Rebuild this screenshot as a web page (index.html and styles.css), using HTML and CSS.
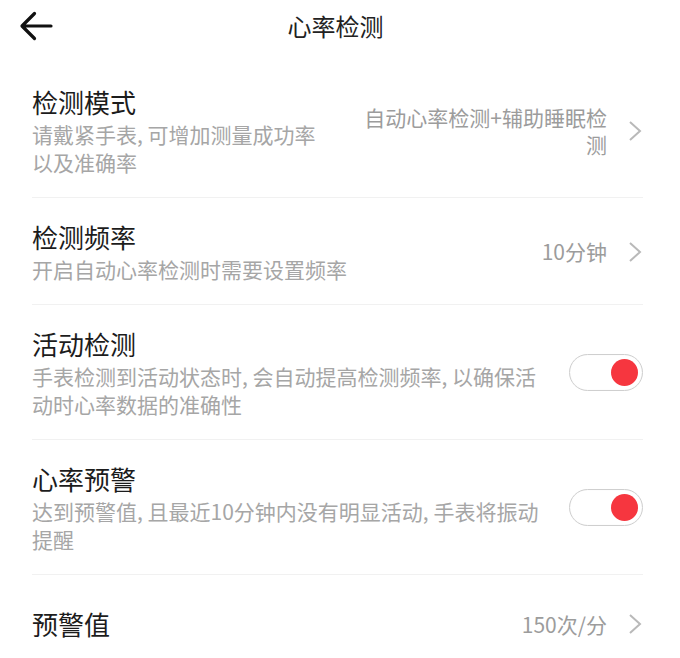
FILE: index.html
```html
<!DOCTYPE html>
<html lang="zh-CN">
<head>
<meta charset="utf-8">
<title>心率检测</title>
<link rel="stylesheet" href="styles.css">
</head>
<body>
<header class="topbar">
  <div class="back">
    <svg width="34" height="30" viewBox="0 0 34 30" aria-hidden="true">
      <path d="M32 15H3.5M15.5 2.5L3 15l12.5 12.5" fill="none" stroke="#111" stroke-width="3.2" stroke-linecap="round" stroke-linejoin="round"/>
    </svg>
  </div>
  <h1 class="title">心率检测</h1>
  <div class="spacer"></div>
</header>

<main class="list">
  <div class="row">
    <div class="text">
      <div class="label">检测模式</div>
      <div class="desc">请戴紧手表, 可增加测量成功率以及准确率</div>
    </div>
    <div class="value value-wrap">自动心率检测+辅助睡眠检测</div>
    <svg class="chev" width="16" height="22" viewBox="0 0 16 22" aria-hidden="true"><polyline points="3,2 13,11 3,20" fill="none" stroke="#b9b9b9" stroke-width="2"/></svg>
  </div>

  <div class="row">
    <div class="text">
      <div class="label">检测频率</div>
      <div class="desc">开启自动心率检测时需要设置频率</div>
    </div>
    <div class="value">10分钟</div>
    <svg class="chev" width="16" height="22" viewBox="0 0 16 22" aria-hidden="true"><polyline points="3,2 13,11 3,20" fill="none" stroke="#b9b9b9" stroke-width="2"/></svg>
  </div>

  <div class="row">
    <div class="text">
      <div class="label">活动检测</div>
      <div class="desc">手表检测到活动状态时, 会自动提高检测频率, 以确保活动时心率数据的准确性</div>
    </div>
    <div class="switch on"><span class="knob"></span></div>
  </div>

  <div class="row">
    <div class="text">
      <div class="label">心率预警</div>
      <div class="desc">达到预警值, 且最近10分钟内没有明显活动, 手表将振动提醒</div>
    </div>
    <div class="switch on"><span class="knob"></span></div>
  </div>

  <div class="row row-single">
    <div class="text">
      <div class="label">预警值</div>
    </div>
    <div class="value">150次/分</div>
    <svg class="chev" width="16" height="22" viewBox="0 0 16 22" aria-hidden="true"><polyline points="3,2 13,11 3,20" fill="none" stroke="#b9b9b9" stroke-width="2"/></svg>
  </div>
</main>
</body>
</html>
```

FILE: styles.css
```css
* { box-sizing: border-box; }

html, body {
  margin: 0;
  padding: 0;
  background: #ffffff;
}

body {
  font-family: "Noto Sans CJK SC", "Noto Sans", sans-serif;
  color: #1c1c1c;
  width: 680px;
  overflow: hidden;
}

.topbar {
  height: 52px;
  display: grid;
  grid-template-columns: 1fr auto 1fr;
  align-items: center;
  padding: 0 28px 0 19px;
}

.back {
  display: flex;
  align-items: center;
}

.back svg { display: block; }

.title {
  margin: 0;
  font-size: 24px;
  font-weight: 400;
  line-height: 32px;
  color: #222;
}

.list {
  margin-top: 11px;
  padding: 0 37px 0 32px;
}

.row {
  display: flex;
  align-items: center;
  padding: 22px 0 21px;
  border-bottom: 1px solid #f1f1f1;
}

.row-single {
  padding: 32px 0 32px;
  border-bottom: none;
}

.text {
  flex: 1;
  min-width: 0;
}

.label {
  font-size: 26px;
  line-height: 34px;
  color: #1c1c1c;
}

.desc {
  margin-top: 1px;
  font-size: 21px;
  line-height: 28px;
  color: #a6a6a6;
}

.value {
  flex-shrink: 0;
  margin-left: 24px;
  font-size: 21px;
  line-height: 27px;
  color: #9c9c9c;
  text-align: right;
}

.value-wrap {
  max-width: 252px;
}

.chev {
  flex-shrink: 0;
  display: block;
  margin-left: 20px;
}

.switch {
  flex-shrink: 0;
  margin-left: 24px;
  width: 74px;
  height: 37px;
  border-radius: 19px;
  border: 1.5px solid #cfcfcf;
  background: #fff;
  box-shadow: inset 0 0 1px rgba(0,0,0,0.08);
  display: flex;
  align-items: center;
  justify-content: flex-end;
  padding-right: 4px;
}

.knob {
  width: 27px;
  height: 27px;
  border-radius: 50%;
  background: #f6363f;
}
```
